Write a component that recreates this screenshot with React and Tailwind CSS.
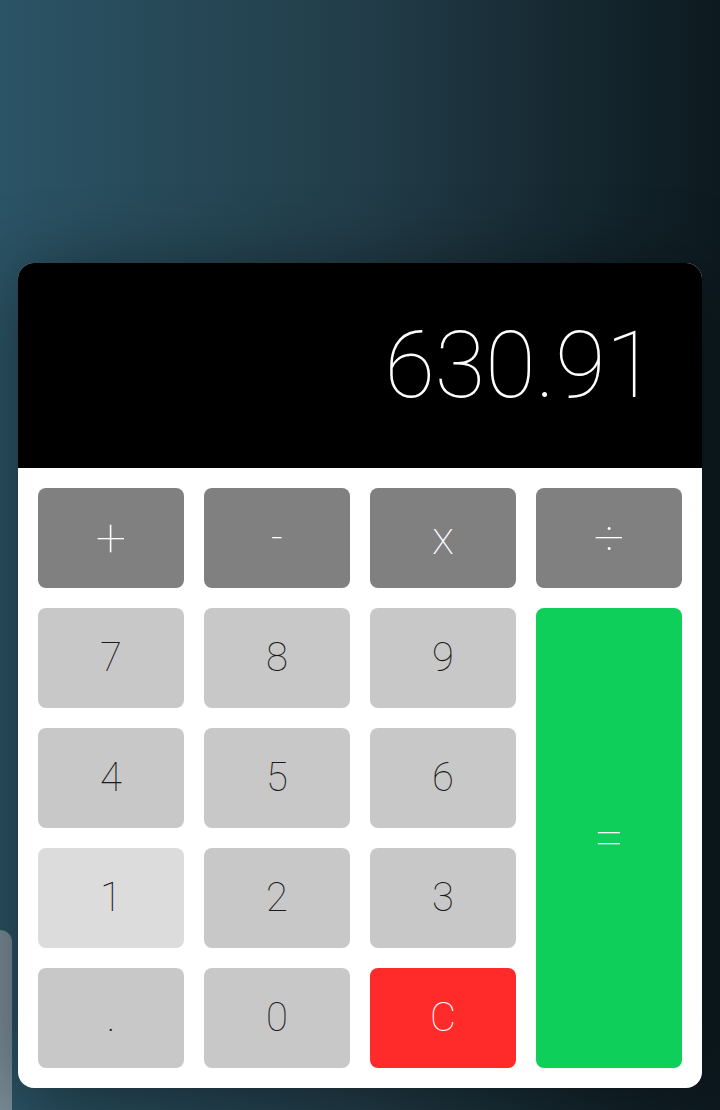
import React, { useState } from 'react';

const keys = [
  { label: '+', kind: 'op', size: 'text-[54px]' },
  { label: '-', kind: 'op' },
  { label: 'x', kind: 'op', size: 'text-[46px]' },
  { label: '÷', kind: 'op', size: 'text-[54px]' },
  { label: '7' }, { label: '8' }, { label: '9' },
  { label: '=', kind: 'eq', size: 'text-[54px]' },
  { label: '4' }, { label: '5' }, { label: '6' },
  { label: '1', active: true }, { label: '2' }, { label: '3' },
  { label: '.' }, { label: '0' },
  { label: 'C', kind: 'clear' },
];

const keyClass = (k) => {
  if (k.kind === 'op') return 'bg-[#808080] text-white';
  if (k.kind === 'eq') return 'bg-[#0ecf5a] text-white row-span-4';
  if (k.kind === 'clear') return 'bg-[#ff2a2a] text-white';
  if (k.active) return 'bg-[#dcdcdc] text-[#1a1a1a]';
  return 'bg-[#c8c8c8] text-[#1a1a1a]';
};

const App = () => {
  const [value] = useState('630.91');

  return (
    <div className="relative min-h-[1110px] overflow-hidden bg-gradient-to-r from-[#2b5466] via-[#223d49] to-[#0d1a20] pt-[263px] px-[18px] font-['Roboto',sans-serif]">
      <div className="absolute left-0 top-[930px] w-[12px] h-[200px] rounded-tr-[14px] bg-[#7a8d97]" />
      <div className="relative rounded-[16px] overflow-hidden bg-white shadow-[0_10px_80px_rgba(0,0,0,0.45)]">
        <div className="h-[205px] bg-black flex items-center justify-end pr-[46px]">
          <span className="text-white font-thin text-[92px] leading-none">{value}</span>
        </div>
        <div className="grid grid-cols-4 auto-rows-[100px] gap-5 p-5">
          {keys.map((k) => (
            <button
              key={k.label}
              className={`rounded-[8px] flex items-center justify-center font-thin leading-none ${k.size || 'text-[40px]'} ${keyClass(k)}`}
            >
              {k.label}
            </button>
          ))}
        </div>
      </div>
    </div>
  );
};

export default App;
